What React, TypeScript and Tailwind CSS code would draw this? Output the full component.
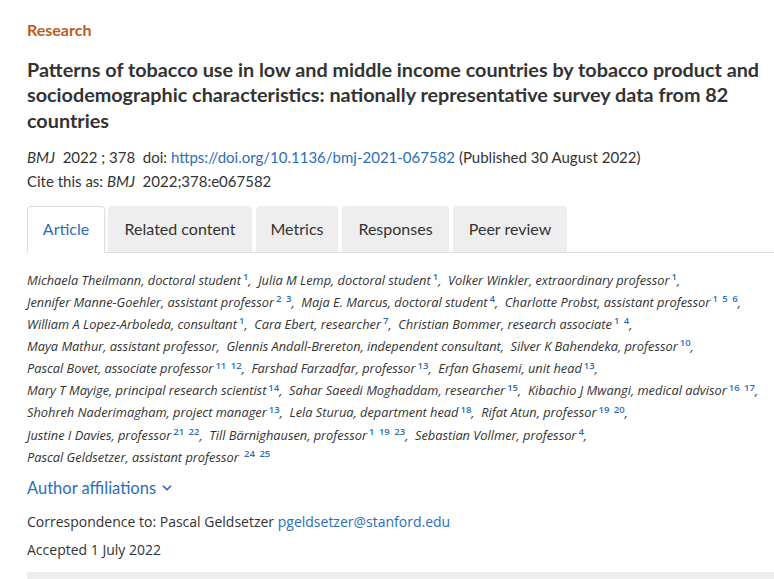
import { ChevronDown } from 'lucide-react';

const AUTHORS: [string, string[]][] = [
  ['Michaela Theilmann, doctoral student', ['1']],
  ['Julia M Lemp, doctoral student', ['1']],
  ['Volker Winkler, extraordinary professor', ['1']],
  ['Jennifer Manne-Goehler, assistant professor', ['2', '3']],
  ['Maja E. Marcus, doctoral student', ['4']],
  ['Charlotte Probst, assistant professor', ['1', '5', '6']],
  ['William A Lopez-Arboleda, consultant', ['1']],
  ['Cara Ebert, researcher', ['7']],
  ['Christian Bommer, research associate', ['1', '4']],
  ['Maya Mathur, assistant professor', []],
  ['Glennis Andall-Brereton, independent consultant', []],
  ['Silver K Bahendeka, professor', ['10']],
  ['Pascal Bovet, associate professor', ['11', '12']],
  ['Farshad Farzadfar, professor', ['13']],
  ['Erfan Ghasemi, unit head', ['13']],
  ['Mary T Mayige, principal research scientist', ['14']],
  ['Sahar Saeedi Moghaddam, researcher', ['15']],
  ['Kibachio J Mwangi, medical advisor', ['16', '17']],
  ['Shohreh Naderimagham, project manager', ['13']],
  ['Lela Sturua, department head', ['18']],
  ['Rifat Atun, professor', ['19', '20']],
  ['Justine I Davies, professor', ['21', '22']],
  ['Till Bärnighausen, professor', ['1', '19', '23']],
  ['Sebastian Vollmer, professor', ['4']],
  ['Pascal Geldsetzer, assistant professor', ['24', '25']],
];

const LINES = [[0, 1, 2], [3, 4, 5], [6, 7, 8], [9, 10, 11], [12, 13, 14], [15, 16, 17], [18, 19, 20], [21, 22, 23], [24]];

const TABS: [string, string][] = [
  ['Article', 'w-[78px]'],
  ['Related content', 'w-[144px]'],
  ['Metrics', 'w-[82px]'],
  ['Responses', 'w-[107px]'],
  ['Peer review', 'w-[114px]'],
];

export default function App() {
  return (
    <div className="w-[774px] h-[579px] overflow-hidden bg-white pl-[27px] text-[#333]" style={{ fontFamily: 'Lato, "Open Sans", sans-serif' }}>
      <div className="pt-[19px] text-[16px] font-bold text-[#c05a1c] leading-[22px]">Research</div>
      <h1 className="mt-[16px] pr-[6px] text-[19.8px] font-bold leading-[25.3px] text-[#333]">
        Patterns of tobacco use in low and middle income countries by tobacco product and sociodemographic characteristics: nationally representative survey data from 82 countries
      </h1>
      <div className="mt-[12px] text-[15px] leading-[24px] text-[#333]">
        <div>
          <i>BMJ</i>&nbsp; 2022 ; 378&nbsp; doi: <span className="text-[#2a6ebb]">https://doi.org/10.1136/bmj-2021-067582</span> (Published 30 August 2022)
        </div>
        <div>
          Cite this as: <i>BMJ</i>&nbsp; 2022;378:e067582
        </div>
      </div>

      <div className="mt-[13px] flex items-end gap-[4px] border-b border-[#ddd] h-[47px]">
        {TABS.map(([t, w], i) => (
          <div
            key={t}
            className={
              i === 0
                ? `${w} h-[47px] -mb-px flex items-center justify-center bg-white border border-[#ddd] border-b-white rounded-t-[4px] text-[#2a6ebb] text-[16px] mr-[-1px]`
                : `${w} h-[46px] flex items-center justify-center bg-[#eee] rounded-t-[4px] text-[#333] text-[16px]`
            }
          >
            {t}
          </div>
        ))}
      </div>

      <div className="mt-[16px] text-[12.8px] leading-[22.1px] italic text-[#333]" style={{ fontFamily: '"Open Sans", sans-serif' }}>
        {LINES.map((line, li) => (
          <div key={li} className="whitespace-nowrap">
            {line.map((ai, k) => {
              const [name, refs] = AUTHORS[ai];
              return (
                <span key={ai}>
                  {k > 0 && '\u00a0 '}
                  {name}
                  {ai === 24 && '\u00a0'}
                  {refs.map((r, ri) => (
                    <sup key={r} className="not-italic text-[9.5px] font-semibold text-[#2a6ebb] ml-[2px]">
                      {ri > 0 && '\u00a0'}
                      {r}
                    </sup>
                  ))}
                  {ai !== 24 && ','}
                </span>
              );
            })}
          </div>
        ))}
      </div>

      <div className="mt-[9px] flex items-center gap-[4px] text-[16.5px] text-[#2a6ebb] leading-[22px]">
        Author affiliations <ChevronDown size={14} strokeWidth={3} />
      </div>
      <div className="mt-[12px] text-[14px] leading-[22px]" style={{ fontFamily: '"Open Sans", sans-serif' }}>
        Correspondence to: Pascal Geldsetzer <span className="text-[#2a6ebb]">pgeldsetzer@stanford.edu</span>
      </div>
      <div className="mt-[6px] text-[14px] leading-[22px]" style={{ fontFamily: '"Open Sans", sans-serif' }}>
        Accepted 1 July 2022
      </div>
      <div className="mt-[11px] h-[20px] bg-[#eee]" />
    </div>
  );
}
